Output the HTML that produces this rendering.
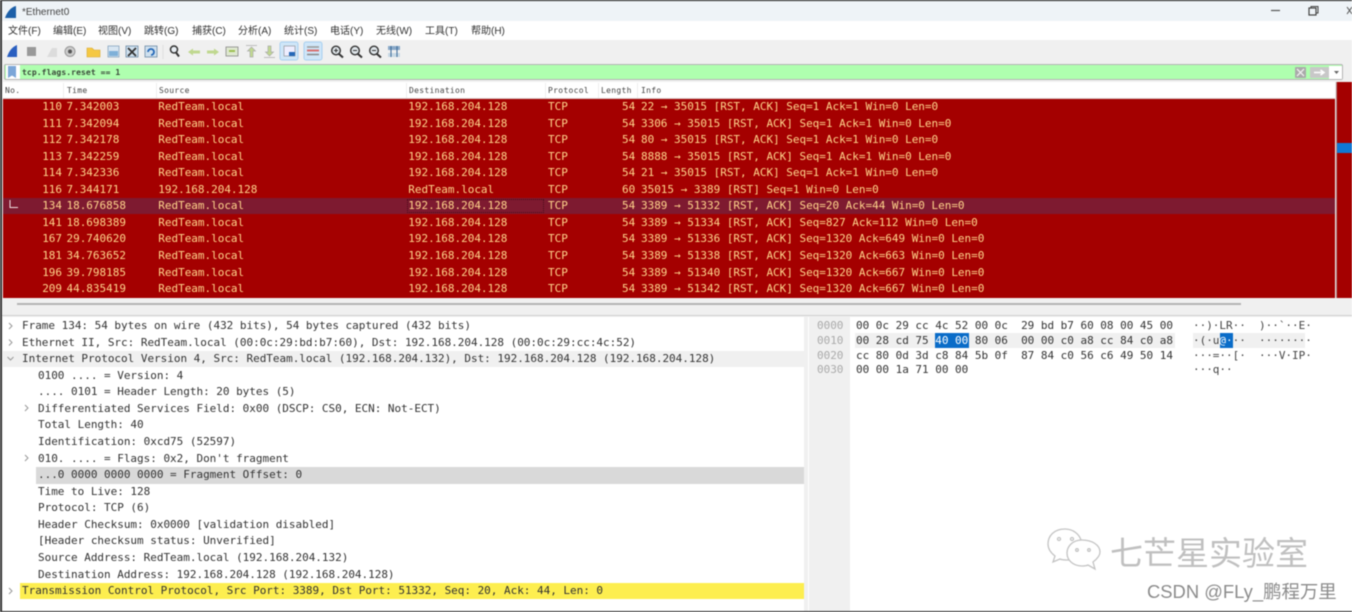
<!DOCTYPE html>
<html lang="zh"><head><meta charset="utf-8"><title>Ethernet0</title>
<style>
html,body{margin:0;padding:0;width:1352px;height:612px;overflow:hidden;background:#fff}
#wrap{position:absolute;left:0;top:0;width:1352px;height:612px;overflow:hidden;background:#f0f0f0;filter:blur(.6px)}
.a{position:absolute}
.m{font-family:"DejaVu Sans Mono","Liberation Mono",monospace;font-size:11px;line-height:16px;white-space:pre;letter-spacing:-.02px}
.r{position:absolute;left:3px;width:1333px;height:16.55px;color:#ffd58c}
.r span{position:absolute;top:.5px;line-height:16px}
.n{left:0;width:59px;text-align:right}.ti{left:63.5px}.s{left:155.3px}.d{left:405.3px}.p{left:545px}.l{left:619px}.i{left:638px}
.dt{position:absolute;color:#333;white-space:pre}
.menu{position:absolute;top:24.5px;font:10px/14px "Liberation Sans","Noto Sans CJK SC",sans-serif;color:#333;white-space:pre}
.hd{position:absolute;top:84px;font-family:"DejaVu Sans Mono",monospace;font-size:8px;line-height:14px;letter-spacing:.3px;color:#444}
.hx{position:absolute;left:856px;color:#333;white-space:pre}
.of{position:absolute;left:817px;color:#aaa;white-space:pre}
.as{position:absolute;left:1193px;color:#444;white-space:pre}
</style></head><body><div id="wrap">

<!-- title bar -->
<div class="a" style="left:0;top:0;width:1352px;height:21px;background:#eef3f7"></div>
<svg class="a" style="left:4px;top:5px" width="14" height="14" viewBox="0 0 14 14"><path d="M1 13 C3 7 7 2 12 1 L12 13 Z" fill="#1c5fa8"/></svg>
<div class="a" style="left:22px;top:5.500px;font:10px/14px 'Liberation Sans',sans-serif;color:#444">*Ethernet0</div>
<svg class="a" style="left:1265px;top:4px" width="87" height="14" viewBox="0 0 87 14"><path d="M6 6.500H15" stroke="#555" stroke-width="1.200"/><rect x="44" y="4" width="7" height="7" fill="none" stroke="#444" stroke-width="1.200"/><path d="M46 4V2.500H53V9H51" fill="none" stroke="#444"/><path d="M82 3L87 10M87 3L82 10" stroke="#555"/></svg>

<!-- menu -->
<div class="a" style="left:0;top:21px;width:1352px;height:19px;background:#fff"></div>
<div class="menu" style="left:8px">文件(F)</div><div class="menu" style="left:53px">编辑(E)</div><div class="menu" style="left:98px">视图(V)</div><div class="menu" style="left:144px">跳转(G)</div><div class="menu" style="left:192px">捕获(C)</div><div class="menu" style="left:238px">分析(A)</div><div class="menu" style="left:284px">统计(S)</div><div class="menu" style="left:330px">电话(Y)</div><div class="menu" style="left:376px">无线(W)</div><div class="menu" style="left:425px">工具(T)</div><div class="menu" style="left:471px">帮助(H)</div>

<!-- toolbar -->
<svg class="a" style="left:0;top:41px" width="420" height="22" viewBox="0 40 420 22">
<path d="M7 56C9 50 12 46 17 44V56Z" fill="#2a5fc0"/>
<rect x="27" y="46" width="9" height="9" fill="#999"/>
<path d="M47 56L52 47H57V56Z" fill="#dcdcdc"/>
<circle cx="70" cy="50.500" r="5" fill="#ccc" stroke="#999"/><circle cx="70" cy="50.500" r="2" fill="#555"/>
<path d="M87 47H92L94 49H100V56H87Z" fill="#f5c842" stroke="#d8a830" stroke-width=".6"/>
<rect x="108" y="45" width="11" height="11" fill="#d8e6f2" stroke="#8aa5c0" stroke-width=".8"/><rect x="109" y="50" width="9" height="5" fill="#7fb0d8"/>
<rect x="126" y="45" width="12" height="11" fill="#cfe0ee" stroke="#6c8aa5" stroke-width=".8"/><path d="M128 47L136 55M136 47L128 55" stroke="#333" stroke-width="1.800"/>
<rect x="145" y="45" width="12" height="11" fill="#cfe0ee" stroke="#6c8aa5" stroke-width=".8"/><path d="M148 51A3 3 0 1 1 151 54" fill="none" stroke="#2468b8" stroke-width="1.800"/>
<path d="M163 44V58" stroke="#ddd"/>
<circle cx="174" cy="48.500" r="3.500" fill="#e8eef3" stroke="#333" stroke-width="1.500"/><path d="M176 51.500L179 55.500" stroke="#333" stroke-width="2"/>
<path d="M188 51L193 47.500V49.500H200V52.500H193V54.500Z" fill="#c0d890"/>
<path d="M219 51L214 47.500V49.500H207V52.500H214V54.500Z" fill="#c0d890"/>
<rect x="226" y="46" width="12" height="9" fill="#dfe8d0" stroke="#888" stroke-width=".8"/><path d="M229 50H235" stroke="#9bbf50" stroke-width="2"/>
<path d="M246 44.500H257M251.500 46L247.500 50H250V56H253V50H255.500Z" fill="#c0d890" stroke="#aaa" stroke-width=".7"/>
<path d="M264 56.500H275M269.500 55L265.500 51H268V45H271V51H273.500Z" fill="#c0d890" stroke="#aaa" stroke-width=".7"/>
<rect x="280" y="41" width="18" height="18" rx="2" fill="#cfe6f8" stroke="#a8d0f0"/>
<rect x="284" y="45" width="11" height="10" fill="#eef" stroke="#888" stroke-width=".6"/><rect x="289" y="51" width="6" height="4" fill="#2468b8"/>
<rect x="304" y="41" width="18" height="18" rx="2" fill="#cfe6f8" stroke="#a8d0f0"/>
<path d="M307 46H319" stroke="#999" stroke-width="1.500"/><path d="M307 49.500H319" stroke="#d87070" stroke-width="2"/><path d="M307 53.500H319" stroke="#888" stroke-width="1.500"/>
<g fill="#dfe6ea" stroke="#333" stroke-width="1.400"><circle cx="336" cy="49.500" r="4.300"/><circle cx="355" cy="49.500" r="4.300"/><circle cx="374" cy="49.500" r="4.300"/></g>
<path d="M339 53L343 56.500M358 53L362 56.500M377 53L381 56.500" stroke="#333" stroke-width="2"/>
<path d="M334 49.500H338M336 47.500V51.500M353 49.500H357M372 49.500H376" stroke="#333"/>
<rect x="388" y="45" width="12" height="4" fill="#8aa9c8"/><rect x="388" y="52" width="12" height="4" fill="#c8d8e4"/><path d="M391 45V56M397 45V56" stroke="#3a6a98"/>
</svg>

<!-- filter -->
<div class="a" style="left:4px;top:63.500px;width:1337px;height:14px;background:#afffaf;border:1.500px solid #b4b4b4;border-radius:2px"></div>
<div class="a" style="left:5.500px;top:65px;width:14px;height:14px;background:#fff"></div>
<svg class="a" style="left:7px;top:65.500px" width="10" height="13" viewBox="0 0 10 13"><path d="M1 0H9V12L5 9.500L1 12Z" fill="#7ba6d8"/></svg>
<div class="a" style="left:22px;top:65px;font:bold 8px/15px 'DejaVu Sans Mono',monospace;letter-spacing:.1px;color:#3a4a3a;white-space:pre">tcp.flags.reset == 1</div>
<svg class="a" style="left:1294px;top:64.500px" width="50" height="15" viewBox="0 0 50 15"><rect x="1" y="2" width="11" height="11" rx="1" fill="#aaa"/><path d="M3 4L10 11M10 4L3 11" stroke="#eee" stroke-width="1.300"/><rect x="16" y="2" width="19" height="11" rx="1" fill="#c8c8c8"/><path d="M20 7.500H29M26.500 5L30 7.500L26.500 10" stroke="#fff" stroke-width="1.600" fill="none"/><rect x="35" y="1" width="13" height="13" fill="#fff"/><path d="M40 6H45L42.500 9Z" fill="#666"/></svg>

<!-- header -->
<div class="a" style="left:3px;top:82px;width:1332px;height:16px;background:#fff;border-bottom:1px solid #d8c8c8"></div>
<div class="hd" style="left:5px">No.</div><div class="hd" style="left:67px">Time</div><div class="hd" style="left:159px">Source</div><div class="hd" style="left:409px">Destination</div><div class="hd" style="left:548px">Protocol</div><div class="hd" style="left:601px">Length</div><div class="hd" style="left:641px">Info</div>
<div class="a" style="left:63px;top:83px;width:1px;height:15px;background:#eee"></div><div class="a" style="left:156px;top:83px;width:1px;height:15px;background:#eee"></div><div class="a" style="left:406px;top:83px;width:1px;height:15px;background:#eee"></div><div class="a" style="left:545px;top:83px;width:1px;height:15px;background:#eee"></div><div class="a" style="left:598px;top:83px;width:1px;height:15px;background:#eee"></div><div class="a" style="left:637px;top:83px;width:1px;height:15px;background:#eee"></div>

<!-- packet list -->
<div class="a" style="left:3px;top:98.500px;width:1332px;height:199px;background:#a40000"></div>
<div class="a" style="left:1336px;top:82px;width:16px;height:216px;background:#a40000;border-left:1px solid #b08080;box-sizing:border-box"></div>
<div class="a" style="left:1337px;top:143px;width:15px;height:10px;background:#0f78d4"></div>
<div class="a" style="left:3px;top:197.800px;width:1332px;height:16.500px;background:#7e1a30"></div>
<div class="a" style="left:407px;top:198.500px;width:137px;height:14.500px;border:1px dotted #4a0a18;box-sizing:border-box"></div>
<svg class="a" style="left:8px;top:198px" width="12" height="14"><path d="M2 2V9.500H10" fill="none" stroke="#f0e0e0"/></svg>

<div class="r m" style="top:98.500px"><span class="n">110</span><span class="ti">7.342003</span><span class="s">RedTeam.local</span><span class="d">192.168.204.128</span><span class="p">TCP</span><span class="l">54</span><span class="i">22 → 35015 [RST, ACK] Seq=1 Ack=1 Win=0 Len=0</span></div>
<div class="r m" style="top:115px"><span class="n">111</span><span class="ti">7.342094</span><span class="s">RedTeam.local</span><span class="d">192.168.204.128</span><span class="p">TCP</span><span class="l">54</span><span class="i">3306 → 35015 [RST, ACK] Seq=1 Ack=1 Win=0 Len=0</span></div>
<div class="r m" style="top:131.600px"><span class="n">112</span><span class="ti">7.342178</span><span class="s">RedTeam.local</span><span class="d">192.168.204.128</span><span class="p">TCP</span><span class="l">54</span><span class="i">80 → 35015 [RST, ACK] Seq=1 Ack=1 Win=0 Len=0</span></div>
<div class="r m" style="top:148.200px"><span class="n">113</span><span class="ti">7.342259</span><span class="s">RedTeam.local</span><span class="d">192.168.204.128</span><span class="p">TCP</span><span class="l">54</span><span class="i">8888 → 35015 [RST, ACK] Seq=1 Ack=1 Win=0 Len=0</span></div>
<div class="r m" style="top:164.700px"><span class="n">114</span><span class="ti">7.342336</span><span class="s">RedTeam.local</span><span class="d">192.168.204.128</span><span class="p">TCP</span><span class="l">54</span><span class="i">21 → 35015 [RST, ACK] Seq=1 Ack=1 Win=0 Len=0</span></div>
<div class="r m" style="top:181.200px"><span class="n">116</span><span class="ti">7.344171</span><span class="s">192.168.204.128</span><span class="d">RedTeam.local</span><span class="p">TCP</span><span class="l">60</span><span class="i">35015 → 3389 [RST] Seq=1 Win=0 Len=0</span></div>
<div class="r m" style="top:197.800px"><span class="n">134</span><span class="ti">18.676858</span><span class="s">RedTeam.local</span><span class="d">192.168.204.128</span><span class="p">TCP</span><span class="l">54</span><span class="i">3389 → 51332 [RST, ACK] Seq=20 Ack=44 Win=0 Len=0</span></div>
<div class="r m" style="top:214.400px"><span class="n">141</span><span class="ti">18.698389</span><span class="s">RedTeam.local</span><span class="d">192.168.204.128</span><span class="p">TCP</span><span class="l">54</span><span class="i">3389 → 51334 [RST, ACK] Seq=827 Ack=112 Win=0 Len=0</span></div>
<div class="r m" style="top:230.900px"><span class="n">167</span><span class="ti">29.740620</span><span class="s">RedTeam.local</span><span class="d">192.168.204.128</span><span class="p">TCP</span><span class="l">54</span><span class="i">3389 → 51336 [RST, ACK] Seq=1320 Ack=649 Win=0 Len=0</span></div>
<div class="r m" style="top:247.500px"><span class="n">181</span><span class="ti">34.763652</span><span class="s">RedTeam.local</span><span class="d">192.168.204.128</span><span class="p">TCP</span><span class="l">54</span><span class="i">3389 → 51338 [RST, ACK] Seq=1320 Ack=663 Win=0 Len=0</span></div>
<div class="r m" style="top:264px"><span class="n">196</span><span class="ti">39.798185</span><span class="s">RedTeam.local</span><span class="d">192.168.204.128</span><span class="p">TCP</span><span class="l">54</span><span class="i">3389 → 51340 [RST, ACK] Seq=1320 Ack=667 Win=0 Len=0</span></div>
<div class="r m" style="top:280.500px"><span class="n">209</span><span class="ti">44.835419</span><span class="s">RedTeam.local</span><span class="d">192.168.204.128</span><span class="p">TCP</span><span class="l">54</span><span class="i">3389 → 51342 [RST, ACK] Seq=1320 Ack=667 Win=0 Len=0</span></div>

<!-- h scrollbar -->
<div class="a" style="left:17px;top:303px;width:1224px;height:2px;background:#b4b4b4"></div>
<div class="a" style="left:0;top:314.500px;width:1352px;height:1.500px;background:#cfcfcf"></div>

<!-- detail pane -->
<div class="a" style="left:3px;top:317px;width:801px;height:294px;background:#fff"></div>
<div class="a" style="left:3px;top:351px;width:801px;height:16px;background:#f0f0f0"></div>
<div class="a" style="left:36px;top:467px;width:768px;height:16.500px;background:#d9d9d9"></div>
<div class="a" style="left:20px;top:583px;width:784px;height:16px;background:#fdee4f"></div>
<svg class="a" style="left:5px;top:320px" width="30" height="280" viewBox="5 320 30 280" fill="none" stroke="#999" stroke-width="1"><path d="M9 323L12 326L9 329M9 339.500L12 342.500L9 345.500M7.500 357L10.500 360L13.500 357M25 405L28 408L25 411M25 455L28 458L25 461M9 588L12 591L9 594"/></svg>
<div class="dt m" style="left:22px;top:318px">Frame 134: 54 bytes on wire (432 bits), 54 bytes captured (432 bits)</div>
<div class="dt m" style="left:22px;top:334.500px">Ethernet II, Src: RedTeam.local (00:0c:29:bd:b7:60), Dst: 192.168.204.128 (00:0c:29:cc:4c:52)</div>
<div class="dt m" style="left:22px;top:351px">Internet Protocol Version 4, Src: RedTeam.local (192.168.204.132), Dst: 192.168.204.128 (192.168.204.128)</div>
<div class="dt m" style="left:38px;top:367.500px">0100 .... = Version: 4</div>
<div class="dt m" style="left:38px;top:384px">.... 0101 = Header Length: 20 bytes (5)</div>
<div class="dt m" style="left:38px;top:400.500px">Differentiated Services Field: 0x00 (DSCP: CS0, ECN: Not-ECT)</div>
<div class="dt m" style="left:38px;top:417px">Total Length: 40</div>
<div class="dt m" style="left:38px;top:433.500px">Identification: 0xcd75 (52597)</div>
<div class="dt m" style="left:38px;top:450.500px">010. .... = Flags: 0x2, Don't fragment</div>
<div class="dt m" style="left:38px;top:467px">...0 0000 0000 0000 = Fragment Offset: 0</div>
<div class="dt m" style="left:38px;top:483.500px">Time to Live: 128</div>
<div class="dt m" style="left:38px;top:500px">Protocol: TCP (6)</div>
<div class="dt m" style="left:38px;top:516.500px">Header Checksum: 0x0000 [validation disabled]</div>
<div class="dt m" style="left:38px;top:533px">[Header checksum status: Unverified]</div>
<div class="dt m" style="left:38px;top:550px">Source Address: RedTeam.local (192.168.204.132)</div>
<div class="dt m" style="left:38px;top:566.500px">Destination Address: 192.168.204.128 (192.168.204.128)</div>
<div class="dt m" style="left:22px;top:583px">Transmission Control Protocol, Src Port: 3389, Dst Port: 51332, Seq: 20, Ack: 44, Len: 0</div>

<!-- hex pane -->
<div class="a" style="left:808px;top:317px;width:544px;height:294px;background:#fff"></div>
<div class="a" style="left:809px;top:317px;width:41px;height:294px;background:#f0f0f0"></div>
<div class="a" style="left:855px;top:333px;width:320px;height:15px;background:#f0f0f0"></div>
<div class="a" style="left:1193px;top:333px;width:112px;height:15px;background:#f0f0f0"></div>
<div class="a" style="left:935px;top:333px;width:34px;height:15px;background:#0a6cc8"></div>
<div class="a" style="left:1220px;top:333px;width:13px;height:15px;background:#0a6cc8"></div>
<div class="of m" style="top:318px">0000</div><div class="of m" style="top:333px">0010</div><div class="of m" style="top:347.500px">0020</div><div class="of m" style="top:362px">0030</div>
<div class="hx m" style="top:318px">00 0c 29 cc 4c 52 00 0c  29 bd b7 60 08 00 45 00</div>
<div class="hx m" style="top:333px">00 28 cd 75 <span style="color:#fff">40 00</span> 80 06  00 00 c0 a8 cc 84 c0 a8</div>
<div class="hx m" style="top:347.500px">cc 80 0d 3d c8 84 5b 0f  87 84 c0 56 c6 49 50 14</div>
<div class="hx m" style="top:362px">00 00 1a 71 00 00</div>
<div class="as m" style="top:318px">··)·LR··  )··`··E·</div>
<div class="as m" style="top:333px">·(·u<span style="color:#fff">@·</span>··  ········</div>
<div class="as m" style="top:347.500px">···=··[·  ···V·IP·</div>
<div class="as m" style="top:362px">···q··</div>

<!-- watermark -->
<svg class="a" style="left:1045px;top:526px" width="62" height="50" viewBox="0 0 62 50" fill="#fff" stroke="#c4c4c4" stroke-width="1.300"><path d="M20 3C9 3 3 10 3 18C3 23 6 27 10 30L8 36L15 33C17 34 19 34 22 34C35 34 40 25 36 14C34 8 28 3 20 3Z"/><path d="M37 14C27 14 22 21 22 27C22 35 29 40 37 40C39 40 41 40 43 39L50 43L48 36C52 33 55 30 55 26C55 19 47 14 37 14Z"/><circle cx="14" cy="13" r="1.500"/><circle cx="27" cy="13" r="1.500"/><circle cx="32" cy="24" r="1.300"/><circle cx="44" cy="24" r="1.300"/></svg>
<div class="a" style="left:1110px;top:532px;font:33px/38px 'Noto Sans CJK SC',sans-serif;color:#c0c0c0;white-space:pre">七芒星实验室</div>
<div class="a" style="left:1147px;top:581px;font:18.400px/22px 'Liberation Sans','Noto Sans CJK SC',sans-serif;color:#8c8c8c;white-space:pre">CSDN @FLy_鹏程万里</div>

<!-- frame -->
<div class="a" style="left:0;top:0;width:1352px;height:1px;background:#111"></div>
<div class="a" style="left:0;top:0;width:1.500px;height:612px;background:#333"></div>
<div class="a" style="left:0;top:610.500px;width:1352px;height:1.500px;background:#222"></div>
</div></body></html>
